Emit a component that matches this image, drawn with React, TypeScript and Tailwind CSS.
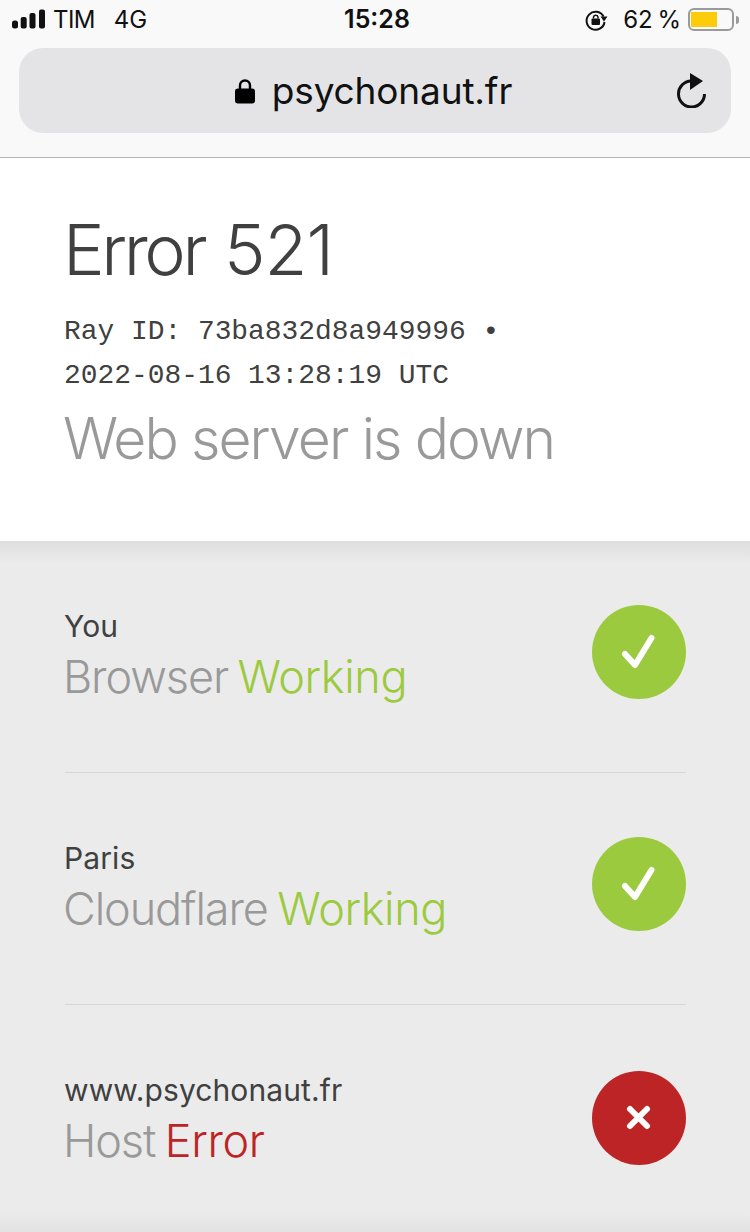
const sans = "font-['Inter','Liberation_Sans',sans-serif]";

const CheckIcon = () => (
  <svg viewBox="0 0 94 94" className="size-[94px]">
    <circle cx="47" cy="47" r="47" fill="#9bca3e" />
    <path d="M33 49 L43 60 L59.500 33" fill="none" stroke="#fff" strokeWidth="6" strokeLinecap="round" strokeLinejoin="round" />
  </svg>
);

const CrossIcon = () => (
  <svg viewBox="0 0 94 94" className="size-[94px]">
    <circle cx="47" cy="47" r="47" fill="#bd2426" />
    <path d="M38 38 L55 55 M55 38 L38 55" fill="none" stroke="#fff" strokeWidth="6" strokeLinecap="round" />
  </svg>
);

const Row = ({ place, name, status, color, ok, last }: { place: string; name: string; status: string; color: string; ok: boolean; last?: boolean }) => (
  <div className={`flex h-[232px] items-start justify-between ${last ? "" : "border-b border-[#d5d5d5]"}`}>
    <div className="-ml-[1px] pt-[66px]">
      <div className="text-[30px] leading-[38px] font-normal text-[#404040] tracking-[0.1px]">{place}</div>
      <div className="mt-[5px] -ml-[1px] text-[45px] leading-[54px] font-light tracking-[-1.1px] [word-spacing:-2px] text-[#999]">
        {name} <span className={`tracking-[-0.4px] ${color}`}>{status}</span>
      </div>
    </div>
    <div className={last ? "mt-[66px]" : "mt-[64px]"}>{ok ? <CheckIcon /> : <CrossIcon />}</div>
  </div>
);

export default function App() {
  return (
    <div className={`${sans} relative h-[1232px] w-[750px] overflow-hidden bg-[#ebebeb]`}>
      <header className="h-[158px] border-b border-[#b4b4b4] bg-[#f9f9f9]">
        <div className="flex h-[48px] items-center justify-between pl-[12px] pr-[11px] pb-[9px] text-[24px] text-[#111]">
          <div className="flex flex-1 items-center">
            <svg viewBox="0 0 34 20" className="-mt-[2px] h-[20px] w-[34px]">
              <rect x="0" y="11.500" width="6" height="8" rx="2.500" fill="#111" />
              <rect x="8.700" y="8" width="6" height="11.500" rx="2" fill="#111" />
              <rect x="17.500" y="4" width="6" height="15.500" rx="2" fill="#111" />
              <rect x="27" y="0.500" width="6" height="19" rx="2" fill="#111" />
            </svg>
            <span className="ml-[7px] tracking-[-0.6px]">TIM</span>
            <span className="ml-[19px]">4G</span>
          </div>
          <div className="pl-[3px] text-center text-[25px] font-semibold">15:28</div>
          <div className="flex flex-1 items-center justify-end">
            <svg viewBox="0 0 24 24" className="h-[24px] w-[24px]">
              <path d="M19.500 8.500 A9 9 0 1 0 20.500 14" fill="none" stroke="#111" strokeWidth="2" />
              <path d="M16.500 8.500 L23.500 8.500 L20 13.500 Z" fill="#111" />
              <rect x="7.500" y="10.500" width="8.500" height="6.500" rx="1" fill="#111" />
              <path d="M9.500 10.500 V9 a2.300 2.300 0 0 1 4.500 0 V10.500" fill="none" stroke="#111" strokeWidth="1.500" />
            </svg>
            <span className="ml-[15px] whitespace-nowrap [word-spacing:-2px]">62 %</span>
            <div className="ml-[7px] flex h-[23px] w-[46px] items-center rounded-[6px] border-2 border-[#9a9a9a] px-[1px]">
              <div className="h-[15px] w-[26px] bg-[#fccb0a]" />
            </div>
            <div className="ml-[2px] h-[8px] w-[3px] rounded-r-full bg-[#9a9a9a]" />
          </div>
        </div>
        <div className="relative mx-[19px] flex h-[85px] items-center justify-center rounded-[24px] bg-[#e4e4e6] pr-[3px] text-[#111]">
          <svg viewBox="0 0 20 26" className="mr-[17px] h-[26px] w-[20px]">
            <path d="M5 12 V7.500 a5 5 0 0 1 10 0 V12" fill="none" stroke="#000" strokeWidth="2.400" />
            <rect x="0" y="10.500" width="20" height="15" rx="3" fill="#000" />
          </svg>
          <span className="text-[37px] leading-[44px] -tracking-[0.15px]">psychonaut.fr</span>
          <svg viewBox="0 0 34 36" className="absolute right-[23px] top-[24px] h-[36px] w-[34px]">
            <path d="M17 9 A13 13 0 1 0 30.500 22" fill="none" stroke="#111" strokeWidth="3" />
            <path d="M16 1 L29 9 L16 18 Z" fill="#111" />
          </svg>
        </div>
      </header>

      <section className="h-[383px] bg-white pl-[63px] pt-[52px]">
        <h1 className="text-[70px] leading-[80px] font-light text-[#404040]">
          <span className="tracking-[-3.4px]">Error</span> <span className="tracking-[-0.9px]">521</span>
        </h1>
        <div className="mt-[20px] ml-[1px] font-['Liberation_Mono',monospace] text-[27.900px] leading-[44px] text-[#404040]">
          <div>Ray ID: 73ba832d8a949996 •</div>
          <div>2022-08-16 13:28:19 UTC</div>
        </div>
        <h2 className="mt-[8px] text-[57px] leading-[66px] font-light tracking-[-1.900px] text-[#999]">Web server is down</h2>
      </section>

      <section className="relative pr-[64px] pl-[65px]">
        <div className="absolute inset-x-0 top-0 h-[22px] bg-gradient-to-b from-[#dedede] to-[#ebebeb]" />
        <div className="relative">
          <Row place="You" name="Browser" status="Working" color="text-[#9bca3e]" ok />
          <Row place="Paris" name="Cloudflare" status="Working" color="text-[#9bca3e]" ok />
          <Row place="www.psychonaut.fr" name="Host" status="Error" color="text-[#bd2426]" ok={false} last />
        </div>
      </section>
      <div className="absolute inset-x-0 bottom-0 h-[18px] bg-gradient-to-b from-[#ebebeb] to-[#e2e2e2]" />
    </div>
  );
}
